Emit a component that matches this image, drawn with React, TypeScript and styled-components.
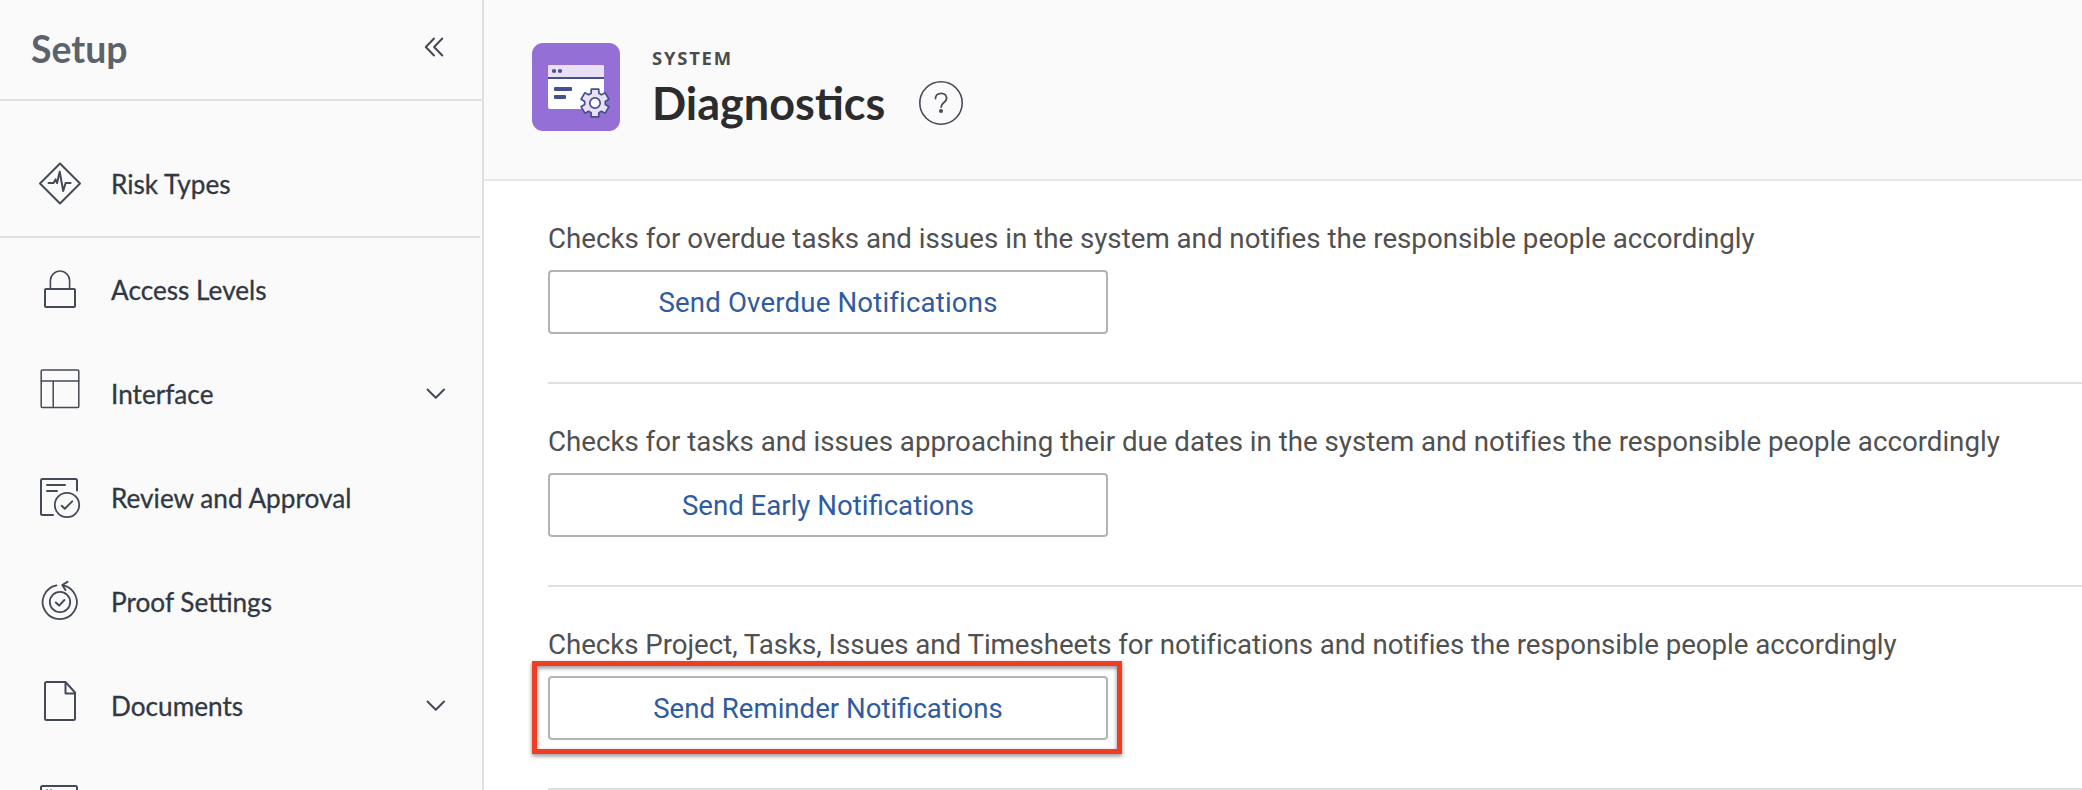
import React from "react";
import styled, { createGlobalStyle } from "styled-components";

const GlobalStyle = createGlobalStyle`
  *, *::before, *::after { box-sizing: border-box; }
  html, body { margin: 0; height: 100%; overflow: hidden; background: #fff; }
  svg { display: block; flex: none; }
`;

const uiFont = `Lato, "Open Sans", sans-serif`;
const bodyFont = `Roboto, "Liberation Sans", sans-serif`;

const Page = styled.div`
  display: flex;
  height: 790px;
  overflow: hidden;
`;

const Sidebar = styled.aside`
  flex: none;
  width: 484px;
  background: #fafafa;
  border-right: 2px solid #e0e0e0;
  overflow: hidden;
`;

const SidebarHeader = styled.div`
  display: flex;
  align-items: center;
  justify-content: space-between;
  height: 101px;
  padding: 0 38px 5px 31px;
  border-bottom: 2px solid #e0e0e0;
`;

const SidebarTitle = styled.h2`
  margin: 0;
  padding-top: 3px;
  font: 700 37.4px/44px ${uiFont};
  color: #5c626c;
`;

const NavGroup = styled.nav<{ $divided?: boolean }>`
  margin-right: 2px;
  padding-top: ${(p) => (p.$divided ? "31px" : "0")};
  border-bottom: ${(p) => (p.$divided ? "2px solid #e0e0e0" : "none")};
`;

const NavItem = styled.a`
  display: flex;
  height: 104px;
  padding: 0 34px 0 36px;
  color: #323843;
`;

const NavIcon = styled.svg`
  width: 48px;
  height: 48px;
  margin-top: 27px;
  fill: none;
  stroke: #454a57;
  stroke-width: 2;
  stroke-linecap: round;
  stroke-linejoin: round;
`;

const NavLabel = styled.span`
  flex: 1;
  margin-left: 27px;
  font: 400 26.2px/105px ${uiFont};
  -webkit-text-stroke: 0.3px currentColor;
  white-space: nowrap;
`;

const LineIcon = styled.svg`
  fill: none;
  stroke: #454a57;
  stroke-width: 2;
  stroke-linecap: round;
  stroke-linejoin: round;
`;

const Chevron = styled(LineIcon)`
  margin-top: 45px;
`;

const Main = styled.main`
  flex: 1;
  min-width: 0;
`;

const PageHeader = styled.header`
  display: flex;
  gap: 32px;
  height: 181px;
  padding: 43px 48px 0;
  background: #fafafa;
  border-bottom: 2px solid #e8e8e8;
`;

const Heading = styled.div`
  display: flex;
  flex-direction: column;
  gap: 9px;
  padding-top: 4px;
`;

const Eyebrow = styled.div`
  font: 700 18.4px/22px "Open Sans", sans-serif;
  letter-spacing: 1.8px;
  color: #4b4b4b;
`;

const TitleRow = styled.div`
  display: flex;
  align-items: center;
  justify-content: space-between;
  width: 311px;
  height: 50px;
`;

const Title = styled.h1`
  margin: 0;
  font: 700 45px/50px ${uiFont};
  color: #2c2c2c;
`;

const Section = styled.section`
  height: 203px;
  margin-left: 64px;
  padding-top: 41px;
  border-bottom: 2px solid #e0e0e0;
`;

const Description = styled.p<{ $tracking?: number }>`
  margin: 0 0 14px;
  font: 400 27.7px/34px ${bodyFont};
  letter-spacing: ${(p) => p.$tracking ?? 0}px;
  color: #505050;
  white-space: nowrap;
`;

const Action = styled.div`
  position: relative;
  width: 560px;
`;

const Button = styled.button<{ $tracking?: number }>`
  display: block;
  width: 100%;
  height: 64px;
  padding: 2px 0 0;
  background: #fff;
  border: 2px solid #b3b3b3;
  border-radius: 4px;
  font: 400 27.6px/58px ${bodyFont};
  letter-spacing: ${(p) => p.$tracking ?? 0}px;
  color: #2f5b9f;
`;

const Highlight = styled.div`
  position: absolute;
  inset: -15px -14px -14px -16px;
  border: 5px solid #ee3f24;
  filter: drop-shadow(0 2px 2px rgba(0, 0, 0, 0.45));
  pointer-events: none;
`;

const RiskIcon = () => (
  <NavIcon viewBox="0 0 48 48">
    <path d="M24 4.5l20 20-20 20-20-20z" />
    <path d="M12.5 24H17.5l2-3.6 1.6 3.6 2.6-11.4 3.5 19.4 2.4-8h5" />
  </NavIcon>
);
const LockIcon = () => (
  <NavIcon viewBox="0 0 48 48">
    <rect x="9" y="24" width="30" height="18" rx="1" />
    <path d="M14.4 24V15.6a9.6 9.6 0 0 1 19.2 0V24" strokeWidth="1.6" />
  </NavIcon>
);
const LayoutIcon = () => (
  <NavIcon viewBox="0 0 48 48">
    <g strokeWidth="1.5">
      <rect x="5.2" y="1" width="37.6" height="37.6" rx="1" />
      <path d="M5.2 12h37.6M17.2 12v26.6" />
    </g>
  </NavIcon>
);
const ReviewIcon = () => (
  <NavIcon viewBox="0 0 48 48">
    <path d="M41 17.5V7.5A1.5 1.5 0 0 0 39.5 6h-33A1.5 1.5 0 0 0 5 7.5v33A1.5 1.5 0 0 0 6.5 42H17" />
    <path d="M11 12h18M11 18h10" />
    <circle cx="31" cy="32" r="12.2" strokeWidth="1.8" />
    <path d="M25.7 32.8l3.1 3 7.4-7.4" />
  </NavIcon>
);
const ProofIcon = () => (
  <NavIcon viewBox="0 0 48 48">
    <path d="M27 8.3A17.1 17.1 0 1 1 20.5 8.3" strokeWidth="1.8" />
    <path d="M31.5 4.8L26.3 8l3.2 5" />
    <circle cx="24" cy="25" r="10.2" strokeWidth="1.8" />
    <path d="M19.8 25.5l3.3 3.1 5.3-5.6" />
  </NavIcon>
);
const DocumentIcon = () => (
  <NavIcon viewBox="0 0 48 48">
    <path d="M29.5 1H10.5A1.5 1.5 0 0 0 9 2.5v35A1.5 1.5 0 0 0 10.5 39h27A1.5 1.5 0 0 0 39 37.5V11.5zM29.5 1v11.5H39" />
  </NavIcon>
);
const WindowIcon = () => (
  <NavIcon viewBox="0 0 48 48">
    <rect x="5" y="1" width="36" height="36" rx="1.5" />
    <path d="M11 5.3h.1M15 5.3h.1" />
  </NavIcon>
);
const ChevronDown = () => (
  <Chevron width="20" height="14" viewBox="0 0 20 14">
    <path d="M1.5 2.5l8.3 8.3 8.3-8.3" />
  </Chevron>
);

const tooth = (angle: number) => {
  const at = (r: number, offset: number) => {
    const a = ((angle + offset - 90) * Math.PI) / 180;
    return `${(r * Math.cos(a)).toFixed(2)} ${(r * Math.sin(a)).toFixed(2)}`;
  };
  return [at(10.4, -22), at(14.4, -15), at(14.4, 15), at(10.4, 22)].join(" L");
};
const gearPath = `M${[0, 60, 120, 180, 240, 300].map(tooth).join(" L")}Z`;

const AppIcon = () => (
  <svg width="88" height="88" viewBox="0 0 88 88">
    <rect width="88" height="88" rx="11" fill="#946fd6" />
    <rect x="16" y="22" width="56" height="44" rx="2" fill="#fff" />
    <path d="M16 34V24a2 2 0 0 1 2-2h52a2 2 0 0 1 2 2v10z" fill="#e9e0f6" />
    <path d="M16 35h56" stroke="#46508f" strokeWidth="2" />
    <circle cx="22" cy="28" r="2.1" fill="#46508f" />
    <circle cx="28" cy="28" r="2.1" fill="#46508f" />
    <rect x="22" y="44" width="18" height="4" rx="1" fill="#46508f" />
    <rect x="22" y="52" width="12" height="4" rx="1" fill="#46508f" />
    <g transform="translate(63 60)" stroke="#46508f" strokeWidth="1.7" strokeLinejoin="round">
      <path d={gearPath} fill="#e9e0f6" />
      <circle r="5.2" fill="#fff" />
    </g>
  </svg>
);

const HelpIcon = () => (
  <LineIcon width="44" height="44" viewBox="0 0 44 44">
    <circle cx="22" cy="22" r="21.2" strokeWidth="1.6" />
    <path d="M16.5 17.5c0-3.2 2.4-5.2 5.6-5.2s5.5 2 5.5 5c0 4.4-5.4 4.1-5.4 8.7" strokeWidth="1.8" />
    <circle cx="22" cy="30" r="2" fill="#454a57" stroke="none" />
  </LineIcon>
);

const items = [
  { label: "Access Levels", Icon: LockIcon },
  { label: "Interface", Icon: LayoutIcon, expandable: true },
  { label: "Review and Approval", Icon: ReviewIcon },
  { label: "Proof Settings", Icon: ProofIcon },
  { label: "Documents", Icon: DocumentIcon, expandable: true },
];

const checks = [
  {
    text: "Checks for overdue tasks and issues in the system and notifies the responsible people accordingly",
    action: "Send Overdue Notifications",
    actionTracking: 0.17,
  },
  {
    text: "Checks for tasks and issues approaching their due dates in the system and notifies the responsible people accordingly",
    action: "Send Early Notifications",
    textTracking: -0.01,
  },
  {
    text: "Checks Project, Tasks, Issues and Timesheets for notifications and notifies the responsible people accordingly",
    action: "Send Reminder Notifications",
    textTracking: -0.05,
    highlighted: true,
  },
];

export default function App() {
  return (
    <Page>
      <GlobalStyle />
      <Sidebar>
        <SidebarHeader>
          <SidebarTitle>Setup</SidebarTitle>
          <LineIcon width="20" height="20" viewBox="0 0 20 20">
            <path d="M10 1.5L1.8 10l8.2 8.5M18.3 1.5L10.1 10l8.2 8.5" />
          </LineIcon>
        </SidebarHeader>
        <NavGroup $divided>
          <NavItem>
            <RiskIcon />
            <NavLabel>Risk Types</NavLabel>
          </NavItem>
        </NavGroup>
        <NavGroup>
          {items.map(({ label, Icon, expandable }) => (
            <NavItem key={label}>
              <Icon />
              <NavLabel>{label}</NavLabel>
              {expandable && <ChevronDown />}
            </NavItem>
          ))}
          <NavItem>
            <WindowIcon />
          </NavItem>
        </NavGroup>
      </Sidebar>
      <Main>
        <PageHeader>
          <AppIcon />
          <Heading>
            <Eyebrow>SYSTEM</Eyebrow>
            <TitleRow>
              <Title>Diagnostics</Title>
              <HelpIcon />
            </TitleRow>
          </Heading>
        </PageHeader>
        {checks.map(({ text, action, textTracking, actionTracking, highlighted }) => (
          <Section key={action}>
            <Description $tracking={textTracking}>{text}</Description>
            <Action>
              <Button $tracking={actionTracking}>{action}</Button>
              {highlighted && <Highlight />}
            </Action>
          </Section>
        ))}
      </Main>
    </Page>
  );
}
